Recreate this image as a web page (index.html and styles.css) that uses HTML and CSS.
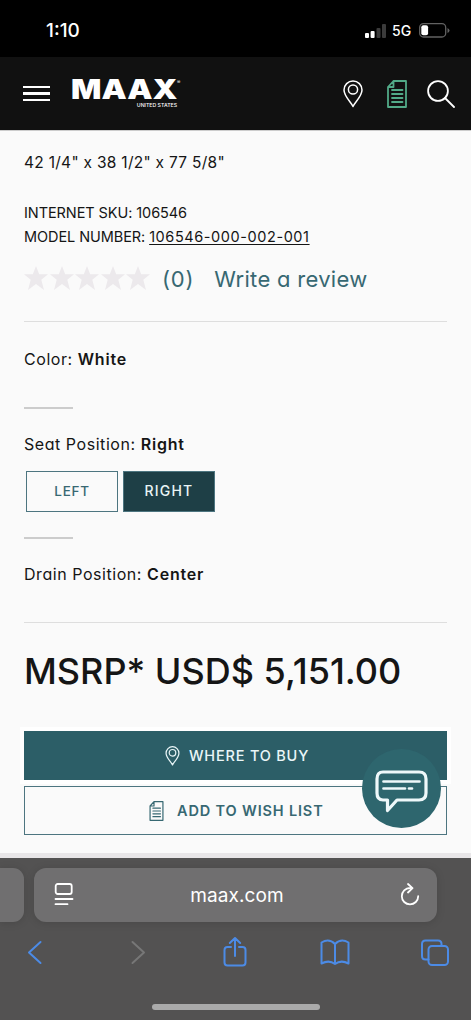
FILE: index.html
```
<!DOCTYPE html>
<html lang="en">
<head>
<meta charset="utf-8">
<title>MAAX</title>
<link rel="stylesheet" href="styles.css">
</head>
<body>
<svg class="defs" width="0" height="0">
  <symbol id="pin" viewBox="0 0 20 28"><path d="M10 26.5C8.500 22.500 1 16.500 1 10a9 9 0 0 1 18 0C19 16.500 11.500 22.500 10 26.500Z"/><circle cx="10" cy="9.500" r="4.600"/></symbol>
  <symbol id="doc" viewBox="0 0 20 28"><path d="M6.500 1H19V27H1V7ZM6.500 1V7H1M5 10H15.500M5 14H15.500M5 18H15.500M5 22H15.500"/></symbol>
  <symbol id="star" viewBox="0 0 24 24"><path d="M12 0L15.200 8.200H24L17.300 13.800L20 24L12 18L4 24L6.700 13.800L0 8.200H8.800Z"/></symbol>
</svg>
<div class="status">
  <span class="time">1:10</span>
  <svg class="signal" width="22" height="14" viewBox="0 0 22 14"><rect x="0" y="9" width="4" height="5" rx="1" fill="#fff"/><rect x="5.600" y="7" width="4" height="7" rx="1" fill="#fff"/><rect x="11.500" y="4" width="4" height="10" rx="1" fill="#3b3b3b"/><rect x="17" y="0" width="4" height="14" rx="1" fill="#3b3b3b"/></svg>
  <span class="net">5G</span>
  <svg class="battery" width="31" height="15" viewBox="0 0 31 15"><rect x=".7" y=".7" width="26" height="13.300" rx="3.800" fill="none" stroke="#626262" stroke-width="1.300"/><rect x="2.300" y="2.300" width="6.800" height="10" rx="2" fill="#fff"/><path d="M28.500 5v5q2-1 2-2.500t-2-2.500" fill="#626262"/></svg>
</div>
<header class="header">
  <div class="burger"><i></i><i></i><i></i></div>
  <div class="logo">
    <div class="logo-name">MAAX</div><span class="reg">®</span>
    <div class="logo-sub">UNITED STATES</div>
  </div>
  <svg class="h-pin line"><use href="#pin"/></svg>
  <svg class="h-doc line"><use href="#doc"/></svg>
  <svg class="h-search line" viewBox="0 0 28 28"><circle cx="11" cy="11" r="9.900"/><path d="M18 18L27 27"/></svg>
</header>
<main class="product">
  <p class="dims">42 1/4" x 38 1/2" x 77 5/8"</p>
  <p class="sku sku-internet">INTERNET SKU: 106546</p>
  <p class="sku"><span class="sku-label">MODEL NUMBER: </span><a>106546-000-002-001</a></p>
  <div class="rating">
    <div class="stars"><svg><use href="#star"/></svg><svg><use href="#star"/></svg><svg><use href="#star"/></svg><svg><use href="#star"/></svg><svg><use href="#star"/></svg></div>
    <span class="count">(0)</span><span class="write">Write a review</span>
  </div>
  <section class="option color"><p>Color: <b>White</b></p></section>
  <section class="option seat">
    <p>Seat Position: <b>Right</b></p>
    <div class="choices"><div class="choice left">LEFT</div><div class="choice on">RIGHT</div></div>
  </section>
  <section class="option drain"><p>Drain Position: <b>Center</b></p></section>
  <div class="price">MSRP* USD$ 5,151.00</div>
  <div class="actions">
    <div class="btn buy"><svg class="line"><use href="#pin"/></svg><span>WHERE TO BUY</span></div>
    <div class="btn wish"><svg class="line"><use href="#doc"/></svg><span>ADD TO WISH LIST</span></div>
    <div class="chat"><svg class="line" width="54" height="44" viewBox="0 0 54 44"><path d="M8 2H44Q51 2 51 9V23Q51 30 44 30H22L12.500 40.500V30H8Q2 30 2 23V9Q2 2 8 2Z" stroke-width="3.200"/><path d="M8.500 11.500H44.500M8.500 18.500H30M34 18.500H37" stroke-width="2.700"/></svg></div>
  </div>
</main>
<footer class="browser">
  <div class="tabs">
    <div class="prev-tab"></div>
    <div class="address">
      <svg class="line" width="20" height="24" viewBox="0 0 20 24"><rect x="1.700" y="1" width="16" height="10" rx="2"/><path d="M1.500 16H18.500M1.500 21.200H13.500"/></svg>
      <span class="url">maax.com</span>
      <svg class="line" width="20" height="24" viewBox="0 0 20 24"><path d="M10 5A8.200 8.200 0 1 0 18.200 13.200M8 1L12.500 5.200L8 9.500"/></svg>
    </div>
  </div>
  <nav class="tools">
    <svg class="line" viewBox="0 0 30 32"><path d="M20.500 6L9 16.500L20.500 27"/></svg>
    <svg class="line off" viewBox="0 0 30 32"><path d="M12.500 6L24 16.500L12.500 27"/></svg>
    <svg class="line" viewBox="0 0 30 32"><path d="M11 11H7.500Q4.500 11 4.500 14V26.500Q4.500 29.500 7.500 29.500H22.500Q25.500 29.500 25.500 26.500V14Q25.500 11 22.500 11H19M15 20V2M9.800 7L15 2L20.200 7"/></svg>
    <svg class="line" viewBox="0 0 30 32"><path d="M15 8Q9 2 1.500 6.500V27.500Q9 23.500 15 28Q21 23.500 28.500 27.500V6.500Q21 2 15 8V28"/></svg>
    <svg class="line" viewBox="0 0 30 32"><rect x="8.500" y="10" width="19.500" height="19" rx="3.500"/><path d="M8.500 23.500H5.500Q2 23.500 2 20V8Q2 4.500 5.500 4.500H18Q21.500 4.500 21.500 8V10"/></svg>
  </nav>
  <div class="home"></div>
</footer>
</body>
</html>
```
FILE: styles.css
```
* { box-sizing: border-box; }
body { margin: 0; width: 471px; height: 1020px; overflow: hidden; background: #fafafa; color: #151515; font-family: Inter, "Liberation Sans", sans-serif; display: flex; flex-direction: column; }
p { margin: 0; white-space: pre; }
svg { display: block; flex: none; }
.defs { position: absolute; }
.line { fill: none; stroke: currentColor; stroke-linecap: round; stroke-linejoin: round; }
.status { height: 57px; flex: none; background: #000; color: #fff; display: flex; align-items: center; padding: 4px 21px 0 46px; }
.time { font-size: 19px; font-weight: 500; letter-spacing: 0; flex: 1; }
.net { font-size: 14px; font-weight: 500; width: 20px; margin: 0 7px 0 5px; }
.header { height: 73px; flex: none; background: #111; color: #fff; display: flex; align-items: flex-start; padding-left: 23px; }
.burger { width: 27px; padding-top: 29px; display: grid; gap: 4px; }
.burger i { height: 2.400px; background: #fff; }
.logo { width: 110px; margin-left: 21px; padding-top: 23px; display: grid; grid-template-columns: 106px 4px; }
.logo-name { width: 88px; font-size: 26.500px; font-weight: 900; line-height: 19px; height: 22px; transform: scaleX(1.2); transform-origin: 0 0; }
.reg { font-size: 5px; line-height: 5px; }
.logo-sub { font-size: 5.200px; font-weight: 500; line-height: 6px; text-align: right; white-space: nowrap; }
.h-pin { width: 20px; height: 28px; margin: 23px 0 0 162px; stroke-width: 1.500; }
.h-doc { width: 20px; height: 28px; margin: 23px 0 0 24px; color: #52aa88; stroke-width: 1.800; }
.h-search { width: 28px; height: 28px; margin: 23px 0 0 20px; stroke-width: 1.800; }
.product { height: 728px; flex: none; border-top: 1px solid #ccc; padding: 20px 24px 0; font-feature-settings: "cv11"; border-bottom: 5px solid #e8e6e8; }
.dims { font-size: 15.500px; line-height: 24px; height: 50px; letter-spacing: .28px; }
.sku { font-size: 14.500px; line-height: 24px; height: 24px; }
.sku-internet, .sku-label { letter-spacing: -.08px; }
.sku a { letter-spacing: .58px; text-decoration: underline; text-underline-offset: 2px; text-decoration-thickness: 1px; }
.rating { height: 73px; padding-top: 17px; border-bottom: 1px solid #dedede; display: flex; color: #376872; font-size: 22px; line-height: 26px; }
.stars { display: flex; gap: 1.500px; width: 138px; }
.stars svg { width: 24px; height: 24px; fill: #ece9ec; }
.count { letter-spacing: .8px; }
.write { margin-left: 20px; letter-spacing: .3px; }
.option { font-size: 16px; line-height: 24px; letter-spacing: .55px; }
.option b { font-weight: 600; letter-spacing: .8px; }
.color { padding-top: 25px; height: 85px; }
.seat::before, .drain::before { content: ""; display: block; width: 49px; height: 1.500px; background: #ccc; }
.seat { height: 130px; }
.seat p { padding-top: 23px; }
.choices { display: flex; gap: 5px; padding: 15px 2px 0; }
.choice { width: 92px; height: 41px; border: 1.500px solid #4d7580; color: #376872; display: grid; place-items: center; font-size: 14px; font-weight: 500; letter-spacing: 1.200px; }
.choice.left { font-size: 13.500px; letter-spacing: .7px; }
.choice.on { background: #1e3f46; color: #e9f4f5; }
.drain { height: 86px; border-bottom: 1px solid #dedede; }
.drain p { padding-top: 23px; }
.price { height: 108px; padding-top: 26px; font-size: 36px; line-height: 44px; font-weight: 500; white-space: nowrap; }
.actions { position: relative; display: grid; gap: 6px; }
.btn { height: 49px; border: 1.500px solid #4d7580; display: flex; align-items: center; color: #376872; font-size: 14.500px; font-weight: 600; letter-spacing: .8px; white-space: nowrap; }
.buy { background: #2c5e67; border-color: #2c5e67; color: #eaf6f8; font-weight: 500; padding-left: 140px; box-shadow: 0 0 0 4px #fff; }
.btn svg { width: 15px; height: 20px; stroke-width: 1.700; }
.buy span { margin-left: 9px; }
.wish { padding-left: 124px; letter-spacing: .85px; }
.wish span { margin-left: 13px; }
.chat { position: absolute; left: 338px; top: 18px; width: 79px; height: 79px; border-radius: 50%; background: #2e666e; color: #eef8fa; display: grid; place-items: center; }
.chat svg { margin-top: 6px; }
.browser { flex: 1; background: #535252; color: #fff; padding-top: 10px; }
.tabs { display: flex; gap: 10px; }
.prev-tab { width: 24px; height: 54px; background: #706f70; border-radius: 0 11px 11px 0; box-shadow: 0 1px 8px #0002; }
.address { width: 403px; height: 54px; background: #706f70; border-radius: 12px; display: flex; align-items: center; justify-content: space-between; padding: 0 17px 0 20px; box-shadow: 0 1px 8px #0002; font-size: 19px; }
.url { letter-spacing: .12px; }
.address svg { stroke-width: 1.800; }
.tools { display: flex; justify-content: space-between; padding: 14px 21px 0 20px; height: 82px; color: #4c8be6; }
.tools svg { width: 30px; height: 32px; stroke-width: 2; }
.tools .off { color: #777; }
.home { width: 168px; height: 6px; margin: 0 auto; border-radius: 3px; background: #aaa; }
```
